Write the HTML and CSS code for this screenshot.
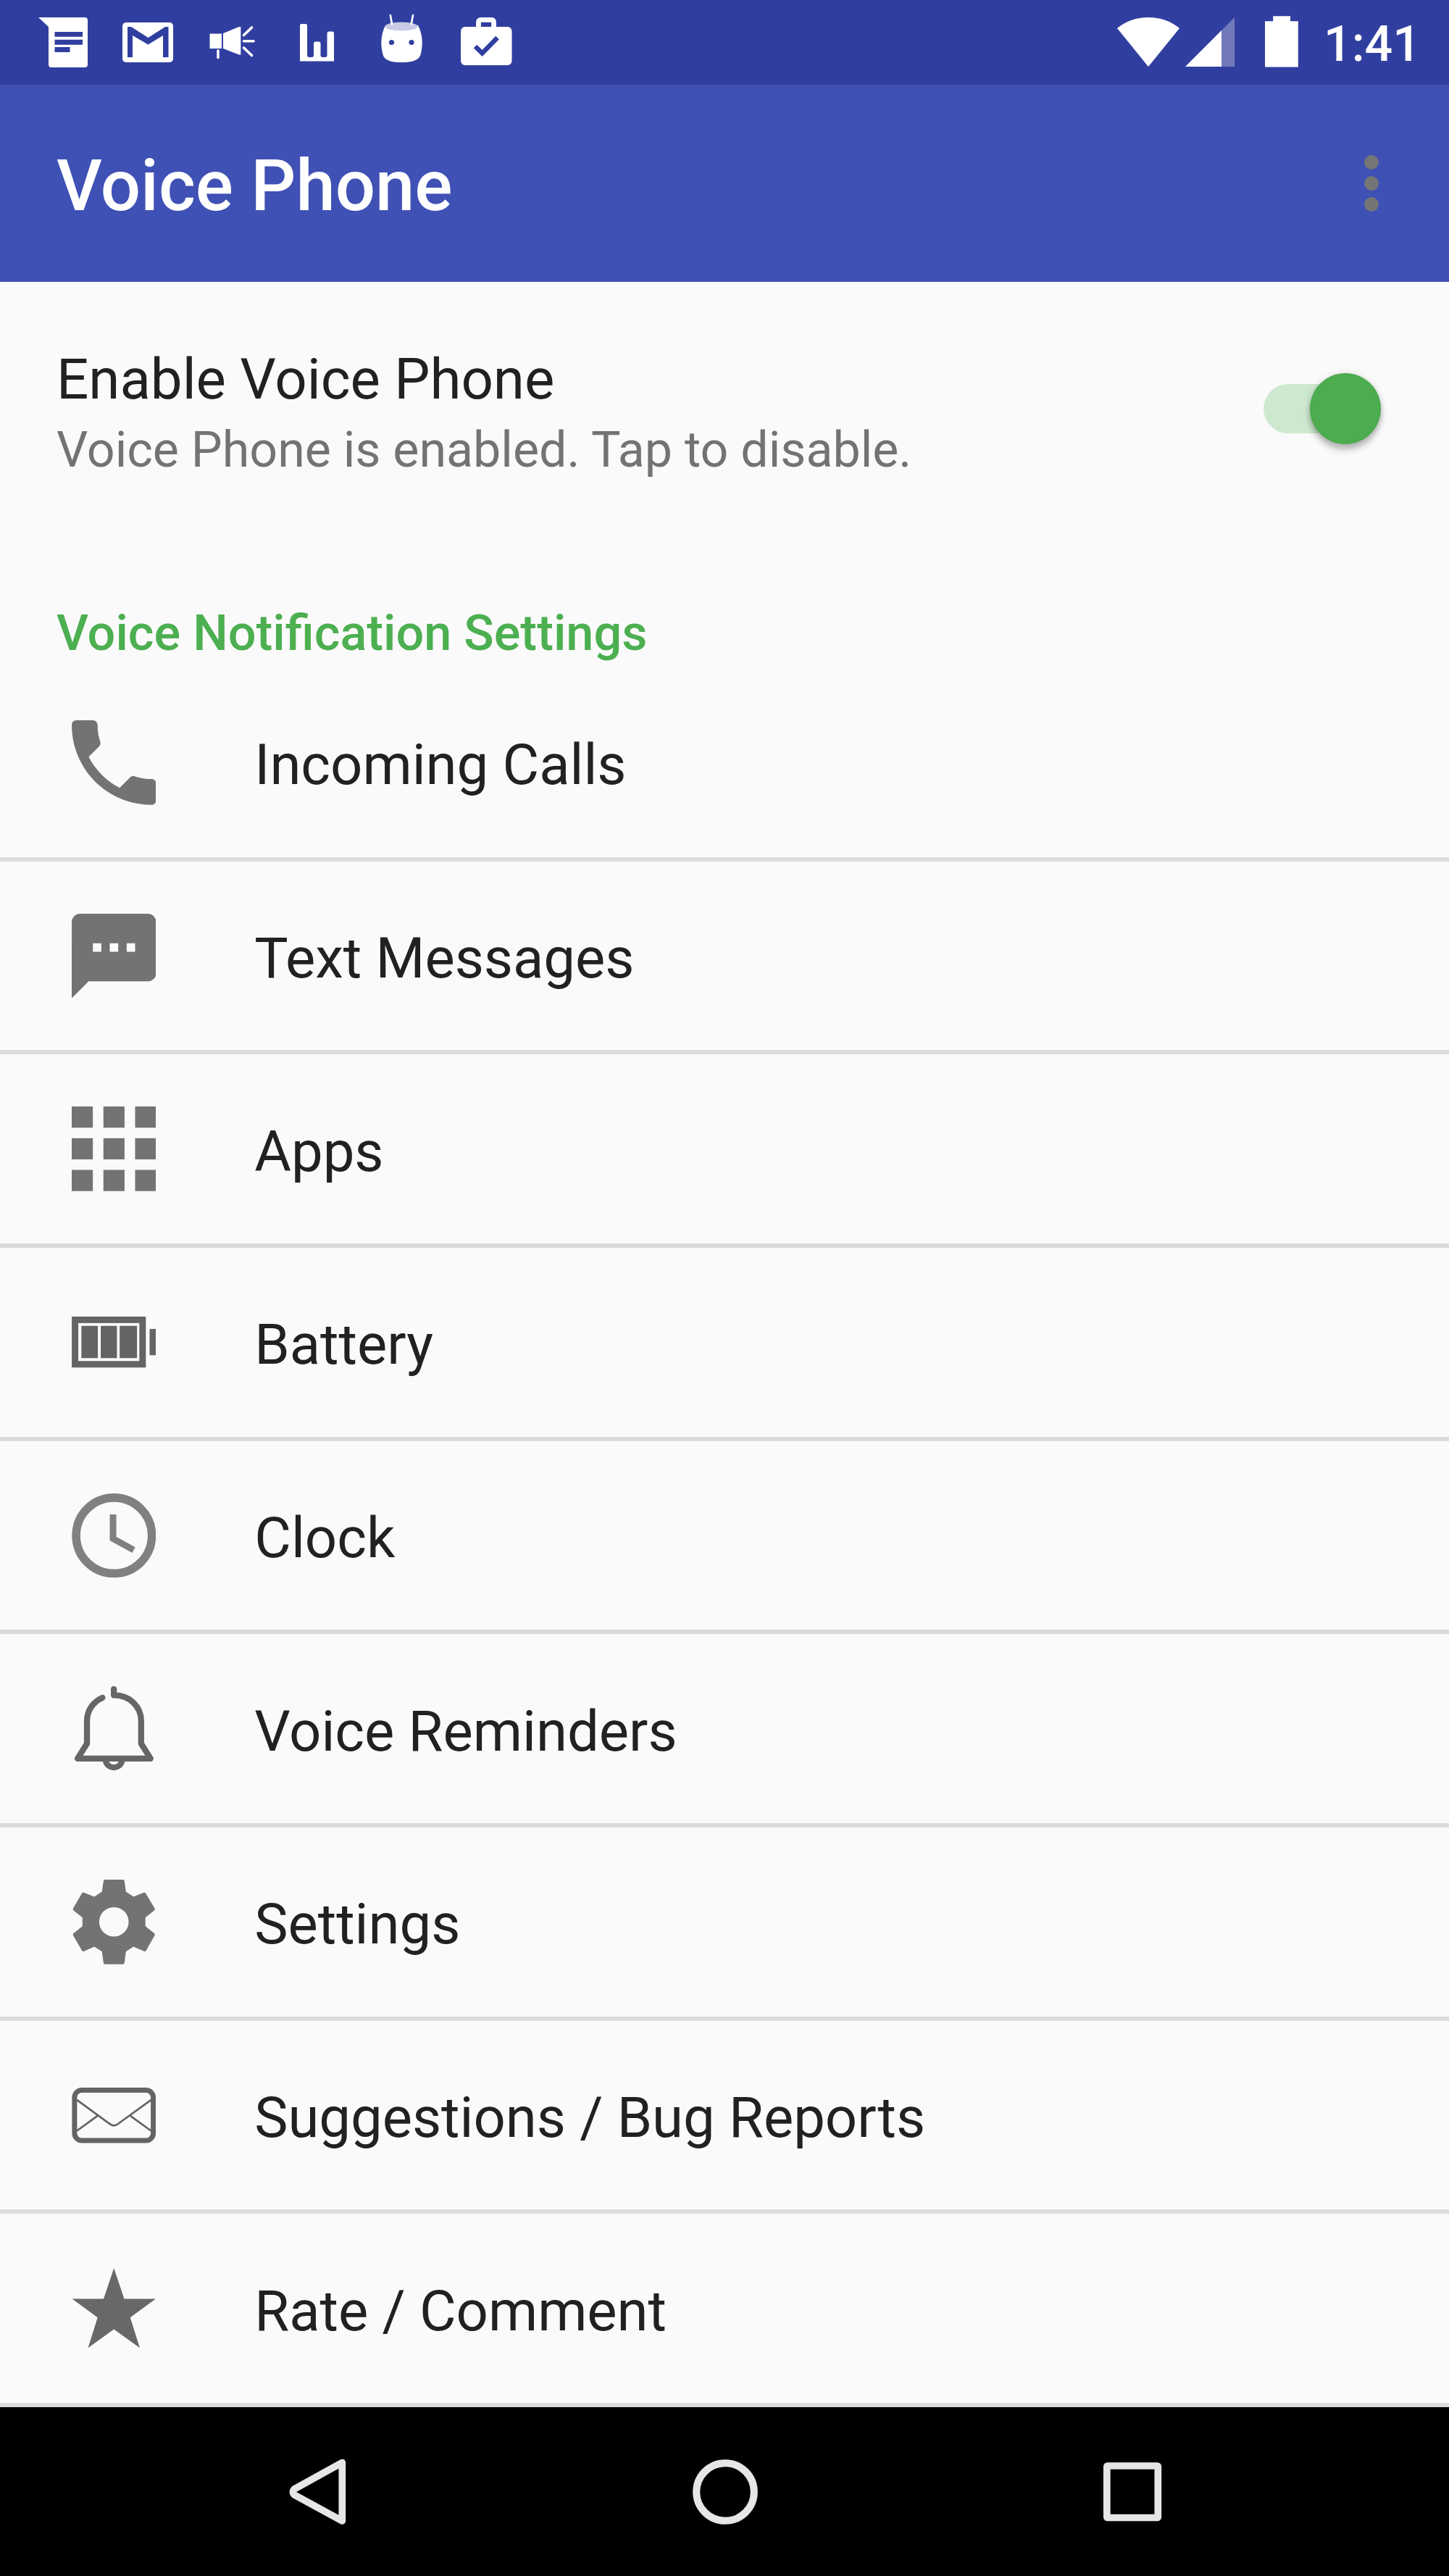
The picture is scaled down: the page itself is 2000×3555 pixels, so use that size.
FILE: index.html
```
<!DOCTYPE html>
<html lang="en">
<head>
  <meta charset="UTF-8" />
  <meta name="viewport" content="width=device-width, initial-scale=1.0" />
  <title>Voice Phone</title>
  <link rel="stylesheet" href="styles.css">
</head>
<body>
  <div class="status-bar">
    <div class="notifications">
      <svg width="70" height="117" viewBox="53 0 70 117">
        <path fill="#fff" d="M53 24h64q4 0 4 4v61q0 4-4 4H71q-4 0-4-4V37z" />
        <path fill="#303f9f" d="M75.5 44H114v6.8H75.5zM75.5 54.8H114v7H75.5zM75.5 65H96.5v7H75.5z" />
      </svg>
      <svg width="70" height="117" viewBox="169 0 70 117">
        <rect x="169" y="31" width="70" height="55" rx="5" fill="#fff" />
        <path fill="#303f9f" d="M176 37h5l23.5 15L228 37h4.500v42H225V49l-20.500 12.500L183 49v30h-7z" />
      </svg>
      <svg width="64" height="117" viewBox="289 0 64 117">
        <path fill="#fff" d="M289.500 46.500H306V67h-16.500zM308 46l22-9h2.300v38.500H330L308 67z" />
        <path stroke="#fff" stroke-width="3.600" stroke-linecap="round" d="M301 70v9.500M336.500 48.500l11-10.500M336.500 56.800h13.500M336.500 66l11 10.500" />
      </svg>
      <svg width="49" height="117" viewBox="414 0 49 117">
        <path fill="#fff" d="M414 35q0-2 2-2h6q2 0 2 2v41q0 3 3 3h3q3 0 3-3V60q0-2.500 2.500-2.500h4.500q2.500 0 2.500 2.500v16q0 3 3 3h3q3 0 3-3V46q0-2.500 2.500-2.500h4.500q2.500 0 2.500 2.500v38.500h-48z" />
      </svg>
      <svg width="58" height="117" viewBox="526 0 58 117">
        <path stroke="#fff" stroke-width="2.600" stroke-linecap="round" d="M538.800 21l2.400 13M570 21l-2.500 13" />
        <path fill="#fff" d="M532 35q22-6 45 0c7 13 7 29 3 42-4 8-15 9-26 9s-21-1-25-9c-4-13-4-29 3-42z" />
        <ellipse cx="554" cy="36.500" rx="22.500" ry="6" fill="#c8cae6" />
        <path stroke="#fff" stroke-width="2.600" d="M540.500 30l.700 4.500M568.300 30l-.800 4.500" />
        <circle cx="540.500" cy="58.500" r="3.600" fill="#303f9f" />
        <circle cx="568" cy="58.500" r="3.600" fill="#303f9f" />
      </svg>
      <svg width="71" height="117" viewBox="636 0 71 117">
        <rect x="636" y="37" width="70.500" height="53" rx="6" fill="#fff" />
        <path fill="none" stroke="#fff" stroke-width="6.800" d="M660.500 39V31q0-3.600 3.500-3.600h14q3.500 0 3.500 3.600v8" />
        <path fill="none" stroke="#303f9f" stroke-width="6.500" d="M656 64l9.600 9.500L686.500 52" />
      </svg>
    </div>
    <div class="system">
      <svg class="wifi" width="87" height="117" viewBox="1542 0 87 117">
        <path fill="#fff" d="M1542 39C1554 29 1569 24 1585 24s31 5 43 15l-43 53z" />
      </svg>
      <svg class="signal" width="68" height="117" viewBox="1636 0 68 117">
        <path fill="#7179bb" d="M1704 24v68h-68z" />
        <path fill="#fff" d="M1686 42v50h-50z" />
      </svg>
      <svg class="charge" width="46" height="117" viewBox="1746 0 46 117">
        <path fill="#fff" d="M1746 29.200h11.200V22.200H1781v7h10.800v63.400H1746z" />
      </svg>
      <span class="time">1:41</span>
    </div>
  </div>

  <div class="toolbar">
    <h1>Voice Phone</h1>
    <div class="overflow"><i></i><i></i><i></i></div>
  </div>

  <div class="enable">
    <div class="enable-text">
      <div class="enable-title">Enable Voice Phone</div>
      <div class="enable-summary">Voice Phone is enabled. Tap to disable.</div>
    </div>
    <div class="switch"><div class="thumb"></div></div>
  </div>

  <h2>Voice Notification Settings</h2>

  <div class="list">
    <div class="row">
      <svg class="icon" viewBox="3 3 18 18"><path fill="#737373" d="M6.620 10.790c1.440 2.830 3.760 5.140 6.590 6.590l2.200-2.200c.27-.27.67-.36 1.020-.24 1.120.37 2.330.57 3.570.57.55 0 1 .45 1 1V20c0 .55-.45 1-1 1-9.390 0-17-7.610-17-17 0-.55.45-1 1-1h3.500c.55 0 1 .45 1 1 0 1.250.2 2.450.57 3.570.11.35.03.74-.25 1.020l-2.200 2.200z" /></svg>
      <span>Incoming Calls</span>
    </div>
    <div class="row">
      <svg class="icon" viewBox="2 2 20 20"><path fill="#737373" d="M20 2H4c-1.100 0-1.990.9-1.990 2L2 22l4-4h14c1.100 0 2-.9 2-2V4c0-1.100-.9-2-2-2zM9 11H7V9h2v2zm4 0h-2V9h2v2zm4 0h-2V9h2v2z" /></svg>
      <span>Text Messages</span>
    </div>
    <div class="row">
      <svg class="icon" viewBox="4 4 16 16"><path fill="#737373" d="M4 8h4V4H4v4zm6 12h4v-4h-4v4zm-6 0h4v-4H4v4zm0-6h4v-4H4v4zm6 0h4v-4h-4v4zm6-10v4h4V4h-4zm-6 4h4V4h-4v4zm6 6h4v-4h-4v4zm0 6h4v-4h-4v4z" /></svg>
      <span>Apps</span>
    </div>
    <div class="row">
      <svg class="icon" viewBox="0 0 117 117">
        <rect x="4.600" y="27.500" width="93.500" height="61.500" fill="none" stroke="#656364" stroke-width="9" />
        <path fill="#656364" d="M13.400 35.800h22.800v44.700H13.400zM40.200 35.800h22.400v44.700H40.200zM66.300 35.800h24.100v44.700H66.300zM107.800 40.100h8.600v36.400h-8.600z" />
      </svg>
      <span>Battery</span>
    </div>
    <div class="row">
      <svg class="icon" viewBox="0 0 117 117">
        <circle cx="58.500" cy="58.300" r="52.400" fill="none" stroke="#808080" stroke-width="11.600" />
        <path fill="none" stroke="#808080" stroke-width="9" d="M57.200 29v33.500l28.600 15.800" />
      </svg>
      <span>Clock</span>
    </div>
    <div class="row">
      <svg class="icon" viewBox="0 0 117 117">
        <path fill="none" stroke="#686566" stroke-width="8.300" stroke-linecap="round" stroke-linejoin="round" d="M58.300 4v8.500C80 12.500 96.100 28 96.100 48v31.500l13 20.700H8.100l13-20.700V48C21.100 33 30 21.500 42.500 16" />
        <path fill="none" stroke="#686566" stroke-width="8" d="M47 102a11.300 10.500 0 0 0 22.600 0" />
      </svg>
      <span>Voice Reminders</span>
    </div>
    <div class="row">
      <svg class="icon" viewBox="0 0 117 117">
        <path fill="#737373" fill-rule="evenodd" d="M46 0h25q1.700 0 2 2l2 14.500 10.400 7L99.500 18q2-.8 3 1l12.300 20.500q1 1.800-.5 3L102 52.500v12l12.300 9.700q1.500 1.300.5 3L103 98q-1 1.800-3 1l-14.600-6.200L75 99.500 73 115q-.3 2-2 2H46q-1.700 0-2-2l-2.200-15.500-10.400-6.700L17 99q-2 .8-3-1L2 77.200q-1-1.700.5-3l12.300-9.700v-12L2.500 42.500q-1.500-1.200-.5-3L14 19q1-1.800 3-1l14.400 5.500 10.400-7L44 2q.3-2 2-2zM58.400 38a20.400 20.400 0 1 0 0 40.800 20.400 20.400 0 1 0 0-40.800z" />
      </svg>
      <span>Settings</span>
    </div>
    <div class="row">
      <svg class="icon" viewBox="0 0 117 117">
        <rect x="3.900" y="23.600" width="109" height="69.700" rx="10" fill="none" stroke="#656364" stroke-width="7" />
        <path fill="none" stroke="#656364" stroke-width="2.700" d="M7 37l46 33.500q5.400 4 10.800 0L110 37M35.400 59.300L7 80M81.400 59.300L110 80" />
      </svg>
      <span>Suggestions / Bug Reports</span>
    </div>
    <div class="row">
      <svg class="icon" viewBox="0 0 117 117">
        <path fill="#696866" d="M58.400 3.200l14.300 42.500h43.500L81 71.500l13.200 42.200-35.800-26-35.800 26L35.800 71.500.6 45.700h43.500z" />
      </svg>
      <span>Rate / Comment</span>
    </div>
  </div>

  <div class="nav-bar">
    <svg width="80" height="92" viewBox="399 3393 80 92">
      <path fill="none" stroke="#e6e6e6" stroke-width="9.700" stroke-linejoin="round" d="M472.300 3398.500v80.500l-66-36q-4-4 0-8z" />
    </svg>
    <svg width="92" height="92" viewBox="0 0 92 92">
      <circle cx="46" cy="46" r="39.800" fill="none" stroke="#e6e6e6" stroke-width="10" />
    </svg>
    <svg width="82" height="92" viewBox="0 0 82 92">
      <rect x="5.800" y="10" width="70.500" height="71.500" rx="1" fill="none" stroke="#e6e6e6" stroke-width="9.700" stroke-linejoin="round" />
    </svg>
  </div>
</body>
</html>
```
FILE: styles.css
```
* {
  box-sizing: border-box;
}
body {
  margin: 0;
  background-color: #fafafa;
  color: #212121;
  font-family: Roboto, sans-serif;
  font-size: 77.8px;
}
svg {
  display: block;
  flex: none;
}
h1, h2 {
  margin: 0;
  font-weight: 500;
}

.status-bar {
  display: flex;
  justify-content: space-between;
  height: 117px;
  padding: 0 45px 0 53px;
  background-color: #303f9f;
  color: white;
}
.notifications {
  display: grid;
  grid-template-columns: 116px 120px 125px 112px 110px 71px;
}
.system {
  display: flex;
}
.signal {
  margin-left: 7px;
}
.charge {
  margin-left: 42px;
}
.time {
  width: 128px;
  margin-left: 35px;
  font-size: 68px;
  font-weight: 500;
  line-height: 123px;
}

.toolbar {
  display: flex;
  justify-content: space-between;
  align-items: center;
  height: 272px;
  padding: 0 97px 0 78px;
  background-color: #3f51b5;
  color: white;
}
.toolbar h1 {
  padding-top: 8px;
  font-size: 97.5px;
}
.overflow {
  display: grid;
  gap: 9px;
}
.overflow i {
  width: 20px;
  height: 20px;
  border-radius: 50%;
  background-color: #757575;
}

.enable {
  display: flex;
  justify-content: space-between;
  height: 377px;
  padding: 89px 94px 0 78px;
}
.enable-title {
  font-size: 78px;
  line-height: 92px;
}
.enable-summary {
  margin-top: 11px;
  color: #737373;
  font-size: 68.1px;
  line-height: 80px;
}
.switch {
  display: flex;
  align-items: center;
  justify-content: flex-end;
  width: 162px;
  height: 68px;
  margin-top: 52px;
  background: linear-gradient(#cde8ce, #cde8ce) no-repeat 0 0 / 112px 68px;
  border-radius: 34px 0 0 34px;
}
.thumb {
  width: 98px;
  height: 98px;
  border-radius: 50%;
  background-color: #4cac4f;
  box-shadow: 0 8px 8px rgba(0, 0, 0, 0.24), 0 0 8px rgba(0, 0, 0, 0.14);
}

h2 {
  height: 156px;
  padding: 68px 78px 0;
  color: #4caf50;
  font-size: 68.4px;
  line-height: 80px;
}

.list {
  height: 2400px;
}
.row {
  display: flex;
  align-items: center;
  height: 266.67px;
  padding-left: 98.6px;
  border-bottom: 6px solid #dbdbdb;
}
.icon {
  width: 116.670px;
  height: 116.670px;
}
.row span {
  padding: 7px 0 0 136px;
}

.nav-bar {
  display: flex;
  align-items: center;
  height: 233px;
  padding-left: 399px;
  background-color: black;
}
.nav-bar svg + svg {
  margin-left: 475.5px;
}
```
